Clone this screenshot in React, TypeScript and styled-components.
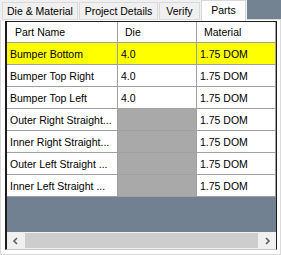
import styled, { createGlobalStyle } from "styled-components";

const GlobalStyle = createGlobalStyle`
	html, body {
		margin: 0;
		padding: 0;
		background: #ffffff;
	}
	body {
		font-family: "Liberation Sans", Arial, sans-serif;
		font-size: 10.5px;
		color: #000000;
	}
`;

const Window = styled.div`
	width: 281px;
	height: 255px;
	display: flex;
	flex-direction: column;
	overflow: hidden;
	background: #ffffff;
`;

const TabStrip = styled.div`
	height: 20px;
	display: flex;
	align-items: flex-end;
	background: #f0f0f0;
	padding-left: 2px;
	gap: 1px;
`;

const Tab = styled.div<{ $w: number; $active?: boolean }>`
	width: ${(p) => p.$w}px;
	box-sizing: border-box;
	height: ${(p) => (p.$active ? 21 : 18)}px;
	margin-bottom: ${(p) => (p.$active ? -1 : 0)}px;
	display: flex;
	align-items: center;
	justify-content: center;
	padding-bottom: ${(p) => (p.$active ? 3 : 0)}px;
	background: ${(p) => (p.$active ? "#ffffff" : "#f0f0f0")};
	border: 1px solid #d9d9d9;
	border-bottom: ${(p) => (p.$active ? "none" : "1px solid #d9d9d9")};
	white-space: nowrap;
	position: relative;
	z-index: ${(p) => (p.$active ? 1 : 0)};
`;

const StripFill = styled.div`
	flex: 1;
	align-self: stretch;
	background: #748392;
	border-bottom: 1px solid #d9d9d9;
`;

const Panel = styled.div`
	flex: 1;
	display: flex;
	background: #ffffff;
	border-left: 1px solid #dadada;
	border-right: 1px solid #dadada;
	border-bottom: 1px solid #dadada;
	padding: 1px 3px 4px 4px;
	min-height: 0;
`;

const Grid = styled.div`
	flex: 1;
	display: flex;
	flex-direction: column;
	border-top: 1px solid #1e1e1e;
	border-left: 2px solid #1e1e1e;
	border-right: 1px solid #1e1e1e;
	border-bottom: 1px solid #c8c8c8;
	background: #728191;
	min-height: 0;
`;

const Row = styled.div<{ $header?: boolean }>`
	display: grid;
	grid-template-columns: 111px 79px 1fr;
	height: ${(p) => (p.$header ? 21 : 22)}px;
	box-sizing: border-box;
	border-bottom: 1px solid #a0a0a0;
	background: #ffffff;
`;

const Cell = styled.div<{ $bg?: string; $pad?: number }>`
	display: flex;
	align-items: center;
	padding-left: ${(p) => p.$pad ?? 3}px;
	background: ${(p) => p.$bg ?? "#ffffff"};
	border-right: 1px solid #a0a0a0;
	white-space: nowrap;
	overflow: hidden;
`;

const Filler = styled.div`
	flex: 1;
`;

const HScroll = styled.div`
	height: 17px;
	display: flex;
	background: #f0f0f0;
`;

const ArrowBtn = styled.div`
	width: 17px;
	display: flex;
	align-items: center;
	justify-content: center;
`;

const Track = styled.div`
	flex: 1;
	display: flex;
	align-items: center;
	padding: 0 1px;
`;

const Thumb = styled.div`
	flex: 1;
	height: 15px;
	background: #cdcdcd;
`;

interface IPart {
	name: string;
	die: string | null;
	material: string;
	selected?: boolean;
}

const parts: IPart[] = [
	{ name: "Bumper Bottom", die: "4.0", material: "1.75 DOM", selected: true },
	{ name: "Bumper Top Right", die: "4.0", material: "1.75 DOM" },
	{ name: "Bumper Top Left", die: "4.0", material: "1.75 DOM" },
	{ name: "Outer Right Straight...", die: null, material: "1.75 DOM" },
	{ name: "Inner Right Straight...", die: null, material: "1.75 DOM" },
	{ name: "Outer Left Straight ...", die: null, material: "1.75 DOM" },
	{ name: "Inner Left Straight ...", die: null, material: "1.75 DOM" },
];

function Chevron({ dir }: { dir: "left" | "right" }) {
	const d = dir === "left" ? "M5 1 L2 4 L5 7" : "M2 1 L5 4 L2 7";
	return (
		<svg width="7" height="8" viewBox="0 0 7 8">
			<path d={d} fill="none" stroke="#606060" strokeWidth="1.6" />
		</svg>
	);
}

function App() {
	return (
		<Window>
			<GlobalStyle />
			<TabStrip>
				<Tab $w={76}>Die &amp; Material</Tab>
				<Tab $w={79}>Project Details</Tab>
				<Tab $w={41}>Verify</Tab>
				<Tab $w={45} $active>
					Parts
				</Tab>
				<StripFill />
			</TabStrip>
			<Panel>
				<Grid>
					<Row $header>
						<Cell $pad={8}>Part Name</Cell>
						<Cell $pad={7}>Die</Cell>
						<Cell $pad={7}>Material</Cell>
					</Row>
					{parts.map((part) => {
						const bg = part.selected ? "#ffff00" : "#ffffff";
						return (
							<Row key={part.name}>
								<Cell $bg={bg}>{part.name}</Cell>
								<Cell $bg={part.die ? bg : "#a9a9a9"}>{part.die}</Cell>
								<Cell $bg={bg}>{part.material}</Cell>
							</Row>
						);
					})}
					<Filler />
					<HScroll>
						<ArrowBtn>
							<Chevron dir="left" />
						</ArrowBtn>
						<Track>
							<Thumb />
						</Track>
						<ArrowBtn>
							<Chevron dir="right" />
						</ArrowBtn>
					</HScroll>
				</Grid>
			</Panel>
		</Window>
	);
}

export default App;
